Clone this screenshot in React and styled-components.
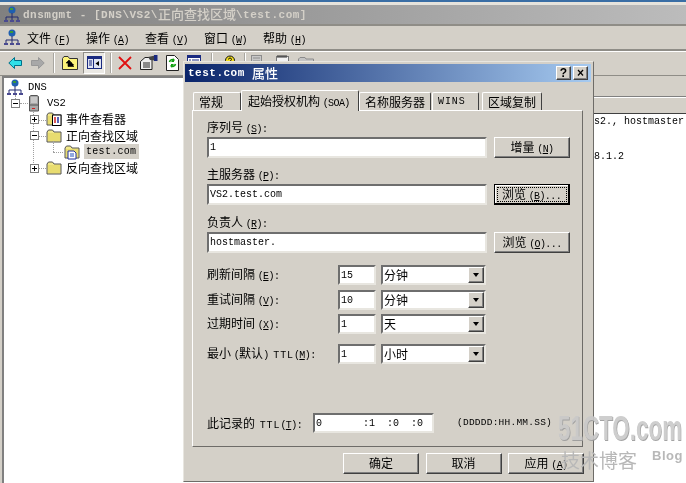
import styled, { createGlobalStyle } from 'styled-components';

const GlobalStyle = createGlobalStyle`
    html, body {
        margin: 0;
        padding: 0;
        background: #fff;
    }
    body {
        font-family: "Noto Sans CJK SC", "Liberation Sans", sans-serif;
        font-size: 12px;
        color: #000;
    }
`;

const monoStack = `"Liberation Mono", "DejaVu Sans Mono", monospace`;

const raised = `
    border: 1px solid;
    border-color: #fff #404040 #404040 #fff;
    box-shadow: inset -1px -1px 0 #808080;
`;

const sunken = `
    border: 2px solid;
    border-color: #6e6e6e #e8e6e0 #e8e6e0 #6e6e6e;
    background: #fff;
    box-sizing: border-box;
`;

const Screen = styled.div`
    position: relative;
    width: 686px;
    height: 483px;
    overflow: hidden;
    background: #d4d0c8;
    display: flex;
    flex-direction: column;
    filter: blur(0.35px);
`;

const TopEdge = styled.div`
    height: 2px;
    background: #3a6ea5;
    border-bottom: 3px solid #e6e3dc;
`;

const TitleBar = styled.div`
    height: 19px;
    display: flex;
    align-items: center;
    gap: 3px;
    padding-left: 4px;
    background: linear-gradient(90deg, #808080, #bcbcbc);
    color: #d4d0c8;
    border-bottom: 2px solid #8f8d87;
`;

const TitleText = styled.span`
    font-family: ${monoStack};
    font-size: 11px;
    letter-spacing: 0.5px;
    font-weight: bold;
    display: flex;
    align-items: center;
    white-space: pre;
    b {
        font-family: "Noto Sans CJK SC", sans-serif;
        font-size: 13px;
        font-weight: 500;
        letter-spacing: 0;
        margin-top: -2px;
    }
`;

const MenuBar = styled.div`
    height: 23px;
    display: flex;
    align-items: center;
    padding-left: 4px;
    border-bottom: 2px solid #8f8d87;
    box-shadow: 0 1px 0 #fff;
`;

const MenuIconSlot = styled.div`
    width: 23px;
    height: 17px;
`;

const MenuItem = styled.span`
    width: 59px;
    white-space: nowrap;
    font-size: 12px;
`;

const Mn = styled.span`
    font-family: ${monoStack};
    font-size: 10px;
    letter-spacing: -0.6px;
`;

const WideMono = styled.span`
    font-family: ${monoStack};
    font-size: 10px;
    letter-spacing: 0.9px;
    margin-left: ${(p) => p.$ml || 0}px;
    margin-right: ${(p) => p.$mr || 0}px;
`;

const TabMono = styled(WideMono)`
    display: block;
    line-height: 18px;
`;

const Hot = ({ k, tail }) => (
    <Mn>
        (<u>{k}</u>){tail}
    </Mn>
);

const ToolBar = styled.div`
    height: 23px;
    padding: 0 0 1px 8px;
    display: flex;
    align-items: center;
    border-bottom: 1px solid #8f8d87;
`;

const ToolSlot = styled.div`
    width: ${(p) => p.$w}px;
    margin-right: ${(p) => p.$mr || 0}px;
    height: 22px;
    display: flex;
    align-items: center;
    justify-content: center;
    flex: none;
    box-sizing: border-box;
    ${(p) =>
        p.$on &&
        `
        background: #ebe9e4;
        border: 1px solid;
        border-color: #8f8d87 #fff #fff #8f8d87;
    `}
`;

const ToolSep = styled.div`
    width: 2px;
    height: 20px;
    flex: none;
    margin: ${(p) => p.$m};
    background: #a8a6a0;
    border-right: 1px solid #fff;
    box-sizing: border-box;
`;

const Workspace = styled.div`
    flex: 1;
    display: flex;
    padding: 0 0 0 2px;
    min-height: 0;
`;

const TreePane = styled.div`
    position: relative;
    width: 190px;
    flex: none;
    padding: 1px 0 0 3px;
    background: #fff;
    border-top: 2px solid #808080;
    border-left: 2px solid #808080;
    box-sizing: border-box;
`;

const TreeRow = styled.div`
    height: 16.2px;
    display: flex;
    align-items: center;
    padding-left: ${(p) => p.$indent}px;
    white-space: nowrap;
`;

const Expander = styled.div`
    width: 9px;
    height: 9px;
    flex: none;
    margin-right: ${(p) => p.$gap}px;
    border: 1px solid #808080;
    box-sizing: border-box;
    background: #fff;
    position: relative;
    &::before {
        content: '';
        position: absolute;
        left: 1px;
        top: 3px;
        width: 5px;
        height: 1px;
        background: #000;
    }
    &::after {
        content: '';
        display: ${(p) => (p.$open ? 'none' : 'block')};
        position: absolute;
        left: 3px;
        top: 1px;
        width: 1px;
        height: 5px;
        background: #000;
    }
`;

const RowIcon = styled.div`
    width: ${(p) => p.$w || 16}px;
    flex: none;
    height: 16px;
    margin-right: ${(p) => p.$mr ?? 4}px;
`;

const TreeLabel = styled.span`
    font-size: 12px;
    line-height: 14px;
`;

const TreeMono = styled.span`
    font-family: ${monoStack};
    font-size: 10.5px;
    padding: 1px 2px;
    line-height: 13px;
    ${(p) => p.$selected && `background: #d4d0c8; width: 51px; font-size: 10px; letter-spacing: 0.3px;`}
`;

const GuideV = styled.div`
    position: absolute;
    left: ${(p) => p.$x}px;
    top: ${(p) => p.$y}px;
    height: ${(p) => p.$h}px;
    border-left: 1px dotted #a0a0a0;
`;

const GuideH = styled.div`
    position: absolute;
    left: ${(p) => p.$x}px;
    top: ${(p) => p.$y}px;
    width: ${(p) => p.$w}px;
    border-top: 1px dotted #a0a0a0;
`;

const DetailPane = styled.div`
    flex: 1;
    display: flex;
    flex-direction: column;
    align-items: flex-end;
`;

const DetailRule = styled.div`
    align-self: stretch;
    height: 1px;
    background: #808080;
    border-bottom: 1px solid #fff;
    margin-top: ${(p) => p.$top}px;
`;

const DetailBody = styled.div`
    align-self: stretch;
    flex: 1;
    background: #fff;
    border-top: 1px solid #404040;
    margin-top: 15px;
    font-family: ${monoStack};
    font-size: 10px;
`;

const DetailLine = styled.div`
    height: 13px;
    margin-left: 402px;
    margin-top: ${(p) => p.$top}px;
    white-space: pre;
`;

/* properties dialog floats above the console window */
const Dialog = styled.div`
    position: absolute;
    left: 183px;
    top: 61px;
    width: 411px;
    height: 421px;
    box-sizing: border-box;
    background: #d4d0c8;
    border: 1px solid;
    border-color: #e8e6e0 #6e6c68 #6e6c68 #e8e6e0;
    padding: 2px 2px 2px 1px;
    display: flex;
    flex-direction: column;
`;

const DialogTitle = styled.div`
    height: 18px;
    flex: none;
    display: flex;
    align-items: center;
    justify-content: space-between;
    padding: 0 3px;
    background: linear-gradient(90deg, #0a246a, #a6caf0);
    color: #fff;
`;

const CaptionGroup = styled.div`
    display: flex;
    gap: 2px;
`;

const CaptionBtn = styled.div`
    width: 15px;
    height: 14px;
    box-sizing: border-box;
    background: #d4d0c8;
    color: #000;
    ${raised}
    font-family: "Liberation Sans", sans-serif;
    font-weight: bold;
    font-size: 12px;
    line-height: 12px;
    text-align: center;
`;

const TabStrip = styled.div`
    height: 20px;
    margin: 8px 0 0 8px;
    display: flex;
    align-items: flex-end;
    flex: none;
    position: relative;
    z-index: 1;
`;

const Tab = styled.div`
    width: ${(p) => p.$w}px;
    height: ${(p) => (p.$active ? 21 : 18)}px;
    margin-bottom: ${(p) => (p.$active ? -1 : 0)}px;
    background: #d4d0c8;
    box-sizing: border-box;
    border: 1px solid;
    border-bottom: none;
    border-color: #fff #404040 #d4d0c8 #fff;
    border-radius: 2px 2px 0 0;
    padding: ${(p) => (p.$active ? '1px 0 0 6px' : '0 0 0 5px')};
    margin-right: ${(p) => p.$mr || 0}px;
    white-space: nowrap;
    line-height: 17px;
`;

const Panel = styled.div`
    height: 337px;
    margin: 0 8px 0 7px;
    flex: none;
    box-sizing: border-box;
    border: 1px solid;
    border-color: #fff #6e6c68 #6e6c68 #fff;
    padding: 9px 13px 0 14px;
`;

const Label = styled.div`
    height: 17px;
    line-height: 14px;
    white-space: nowrap;
    margin-top: ${(p) => p.$top || 0}px;
`;

const FieldRow = styled.div`
    display: flex;
    gap: 7px;
    margin-bottom: ${(p) => p.$mb || 0}px;
`;

const TextBox = styled.div`
    ${sunken}
    width: ${(p) => p.$w}px;
    height: ${(p) => p.$h || 20}px;
    padding-left: 1px;
    font-family: ${monoStack};
    font-size: 10px;
    line-height: 17px;
    white-space: pre;
    flex: none;
`;

const Button = styled.div`
    width: 76px;
    height: 21px;
    box-sizing: border-box;
    flex: none;
    ${raised}
    text-align: center;
    line-height: 18px;
    white-space: nowrap;
    background: #d4d0c8;
    ${(p) =>
        p.$default &&
        `
        border: 1px solid #000;
        border-right-width: 2px;
        border-bottom-width: 2px;
        box-shadow: inset 1px 1px 0 #fff;
        outline: 1px dotted #000;
        outline-offset: -4px;
    `}
`;

const IntervalRow = styled.div`
    display: flex;
    align-items: center;
    height: 20px;
    margin-bottom: ${(p) => p.$mb || 4}px;
`;

const IntervalLabel = styled.div`
    width: 131px;
    flex: none;
    white-space: nowrap;
    line-height: 15px;
`;

const Combo = styled.div`
    ${sunken}
    width: 105px;
    height: 20px;
    margin-left: 5px;
    display: flex;
    justify-content: space-between;
    padding-left: 1px;
    line-height: 16px;
`;

const ComboArrow = styled.div`
    width: 16px;
    height: 16px;
    background: #d4d0c8;
    ${raised}
    box-sizing: border-box;
    display: flex;
    align-items: center;
    justify-content: center;
    &::after {
        content: '';
        border: 3.5px solid transparent;
        border-top: 4px solid #000;
        border-bottom: none;
    }
`;

const TtlRow = styled.div`
    display: flex;
    align-items: center;
    height: 21px;
    margin-top: 48px;
`;

const TtlLabel = styled.div`
    width: 106px;
    flex: none;
    white-space: nowrap;
`;

const TtlBox = styled.div`
    ${sunken}
    width: 121px;
    height: 20px;
    flex: none;
    font-family: ${monoStack};
    font-size: 10px;
    line-height: 17px;
    display: grid;
    grid-template-columns: 47px 24px 24px 20px;
    padding-left: 1px;
    white-space: pre;
`;

const TtlFormat = styled.div`
    margin-left: 23px;
    font-family: ${monoStack};
    font-size: 9.5px;
    letter-spacing: 0.24px;
    white-space: nowrap;
`;

const ButtonRow = styled.div`
    display: flex;
    justify-content: flex-end;
    gap: 6.5px;
    margin: 6px 7px 0 0;
`;

const Watermark = styled.div`
    position: absolute;
    left: 558px;
    top: 407px;
    width: 128px;
    pointer-events: none;
`;

const WatermarkBig = styled.div`
    font-family: "Liberation Sans", sans-serif;
    font-weight: bold;
    font-size: 35px;
    line-height: 42px;
    white-space: nowrap;
    transform: scaleX(0.64);
    transform-origin: left;
    width: 200px;
    color: #c9c9c9;
    text-shadow: 1px 1px 0 #9a9a9a;
    opacity: 0.9;
`;

const WatermarkSmall = styled.div`
    display: flex;
    justify-content: space-between;
    align-items: flex-start;
    padding: 0 3px;
    font-size: 19px;
    line-height: 22px;
    color: #b8b8b8;
    span {
        font-family: "Liberation Sans", sans-serif;
        font-weight: bold;
        font-size: 13px;
        letter-spacing: 0.5px;
        line-height: 13px;
    }
`;

const NetworkIcon = () => (
    <svg width="16" height="17" viewBox="0 0 16 17">
        <circle cx="8" cy="4" r="3.5" fill="#1f5fb0" />
        <path d="M6 2h3v2H6z" fill="#3a9a3a" />
        <path d="M8 7v4M2 11h12M2 11v3M8 11v3M14 11v3" stroke="#222a70" fill="none" />
        <path d="M0 14h4v2H0zM6 14h4v2H6zM12 14h4v2h-4z" fill="#4a4a90" />
    </svg>
);

const ServerIcon = () => (
    <svg width="11" height="17" viewBox="0 0 11 17">
        <path d="M1.5 1.5L3 .5h6l1.5 1V16h-9z" fill="#a8a8a8" stroke="#555" />
        <path d="M3 3h6M3 5h6M3 7h6" stroke="#e8e8e8" />
        <path d="M1 10h9" stroke="#555" />
        <rect x="4" y="13" width="3" height="1" fill="#d02020" />
    </svg>
);

const FolderIcon = ({ children }) => (
    <svg width="16" height="16" viewBox="0 0 16 16">
        <path d="M1 4l1.5-2h4L8 4h7v10H1z" fill="#f2e88a" stroke="#555" />
        <path d="M2 5h12v8H2z" fill="#e8dc70" />
        {children}
    </svg>
);

const EventIcon = () => (
    <FolderIcon>
        <rect x="6.5" y="4" width="8.5" height="10.5" fill="#fff" stroke="#000" />
        <path d="M9 6v6" stroke="#d02020" strokeWidth="1.5" />
        <path d="M12 6v6" stroke="#2030a0" strokeWidth="1.5" />
    </FolderIcon>
);

const ZoneIcon = () => (
    <FolderIcon>
        <path d="M4 7h6l2 2v6H4z" fill="#fff" stroke="#2030a0" />
        <path d="M6 10h4M6 12h4" stroke="#2050c0" />
    </FolderIcon>
);

const BackArrow = () => (
    <svg width="14" height="12" viewBox="0 0 14 12">
        <path d="M6.5.5L.8 6l5.7 5.5V8.5h7v-5h-7z" fill="#2fe0e8" stroke="#00708a" />
    </svg>
);

const ForwardArrow = () => (
    <svg width="14" height="12" viewBox="0 0 14 12">
        <path d="M7.5.5L13.2 6l-5.7 5.5V8.5h-7v-5h7z" fill="#a8a8a8" stroke="#989898" />
    </svg>
);

const UpFolder = () => (
    <svg width="16" height="14" viewBox="0 0 16 14">
        <path d="M.5 2.5L2 .5h4l1.5 2h8v11H.5z" fill="#fdf47a" stroke="#333" />
        <path d="M7 4L4 7h2v3.5h6M7 4l3 3H8v2h4" fill="#000" stroke="#000" strokeWidth=".6" />
    </svg>
);

const PaneToggle = () => (
    <svg width="15" height="13" viewBox="0 0 15 13">
        <rect x=".5" y=".5" width="14" height="12" fill="#dfe3f2" stroke="#1a2a80" />
        <path d="M1 1h13v2H1z" fill="#1a2a80" />
        <path d="M6.5 3v9" stroke="#1a2a80" />
        <path d="M2 5h3M2 7h3M2 9h3" stroke="#1a2a80" />
        <path d="M12 5v5L8.5 7.5z" fill="#000" />
    </svg>
);

const RedX = () => (
    <svg width="14" height="14" viewBox="0 0 14 14">
        <path d="M1 1l12 12M13 1L1 13" stroke="#e01010" strokeWidth="1.8" />
    </svg>
);

const PropertiesIcon = () => (
    <svg width="18" height="15" viewBox="0 0 18 15">
        <path d="M.5 6.5L5 2.5h7v12H.5z" fill="#eee" stroke="#222" />
        <path d="M3 8h7M3 10h7M3 12h7" stroke="#222" />
        <path d="M8 2l7-1.5v5L10 5z" fill="#444" />
        <rect x="14" y="0" width="3.5" height="6" fill="#1a2a80" />
    </svg>
);

const RefreshIcon = () => (
    <svg width="13" height="16" viewBox="0 0 13 16">
        <path d="M.5.5h8l4 4v11H.5z" fill="#fff" stroke="#222" />
        <path d="M3.5 7a3 3 0 015-1.5M9.5 9a3 3 0 01-5 1.5" stroke="#10a010" strokeWidth="1.6" fill="none" />
        <path d="M8 3v4h-3zM5 13V9h3z" fill="#10a010" />
    </svg>
);

const ListIcon = () => (
    <svg width="14" height="16" viewBox="0 0 14 16">
        <rect x=".5" y=".5" width="13" height="15" fill="#fff" stroke="#1a2a80" />
        <path d="M1 1h12v2H1z" fill="#1a2a80" />
        <path d="M2 5h2M5 5h7M2 8h2M5 8h7" stroke="#1a2a80" />
    </svg>
);

const HelpIcon = () => (
    <svg width="15" height="16" viewBox="0 0 15 16">
        <path d="M.5 15.5L5 7.5h3v8z" fill="#fff" stroke="#111" />
        <circle cx="10" cy="5.5" r="4.5" fill="#f5e020" stroke="#111" />
        <path d="M8.5 4.5a1.5 1.5 0 113 0L10 6.5v1" stroke="#111" fill="none" />
    </svg>
);

const GrayPage = () => (
    <svg width="11" height="16" viewBox="0 0 11 16">
        <rect x=".5" y=".5" width="10" height="15" fill="#c8c8c8" stroke="#8c8c8c" />
        <path d="M2 3h7M2 6h7" stroke="#8c8c8c" />
    </svg>
);

const GrayNote = () => (
    <svg width="13" height="16" viewBox="0 0 13 16">
        <rect x=".5" y="1.5" width="12" height="14" fill="#f2f2f2" stroke="#777" />
        <path d="M2 0v3M4 0v3M6 0v3M8 0v3M10 0v3" stroke="#333" />
    </svg>
);

const GrayFolder = () => (
    <svg width="16" height="16" viewBox="0 0 16 16">
        <path d="M.5 15.5V4L2 2.5h5L8 4h7.5v11.5z" fill="#c4c4c4" stroke="#8c8c8c" />
    </svg>
);

function TreeView() {
    return (
        <TreePane>
            <GuideV $x={11} $y={17} $h={4} />
            <GuideH $x={16} $y={25} $w={8} />
            <GuideV $x={29} $y={34} $h={53} />
            <GuideH $x={34} $y={42} $w={8} />
            <GuideH $x={34} $y={58} $w={8} />
            <GuideV $x={49} $y={63} $h={11} />
            <GuideH $x={49} $y={74} $w={10} />
            <GuideH $x={34} $y={90} $w={8} />
            <TreeRow $indent={0}>
                <RowIcon $mr={3}>
                    <NetworkIcon />
                </RowIcon>
                <TreeMono>DNS</TreeMono>
            </TreeRow>
            <TreeRow $indent={4}>
                <Expander $open $gap={8} />
                <RowIcon $w={11} $mr={6}>
                    <ServerIcon />
                </RowIcon>
                <TreeMono>VS2</TreeMono>
            </TreeRow>
            <TreeRow $indent={23}>
                <Expander $gap={7} />
                <RowIcon>
                    <EventIcon />
                </RowIcon>
                <TreeLabel>事件查看器</TreeLabel>
            </TreeRow>
            <TreeRow $indent={23}>
                <Expander $open $gap={7} />
                <RowIcon>
                    <FolderIcon />
                </RowIcon>
                <TreeLabel>正向查找区域</TreeLabel>
            </TreeRow>
            <TreeRow $indent={57}>
                <RowIcon>
                    <ZoneIcon />
                </RowIcon>
                <TreeMono $selected>test.com</TreeMono>
            </TreeRow>
            <TreeRow $indent={23}>
                <Expander $gap={7} />
                <RowIcon>
                    <FolderIcon />
                </RowIcon>
                <TreeLabel>反向查找区域</TreeLabel>
            </TreeRow>
        </TreePane>
    );
}

function SoaDialog() {
    return (
        <Dialog>
            <DialogTitle>
                <TitleText>
                    test.com <b>属性</b>
                </TitleText>
                <CaptionGroup>
                    <CaptionBtn>?</CaptionBtn>
                    <CaptionBtn>×</CaptionBtn>
                </CaptionGroup>
            </DialogTitle>
            <TabStrip>
                <Tab $w={48}>常规</Tab>
                <Tab $w={118} $active>
                    起始授权机构 <Mn>(SOA)</Mn>
                </Tab>
                <Tab $w={72} $mr={1}>
                    名称服务器
                </Tab>
                <Tab $w={47} $mr={3}>
                    <TabMono>WINS</TabMono>
                </Tab>
                <Tab $w={60}>区域复制</Tab>
            </TabStrip>
            <Panel>
                <Label>
                    序列号 <Hot k="S" tail=":" />
                </Label>
                <FieldRow>
                    <TextBox $w={280} $h={21}>
                        1
                    </TextBox>
                    <Button>
                        增量 <Hot k="N" />
                    </Button>
                </FieldRow>
                <Label $top={9}>
                    主服务器 <Hot k="P" tail=":" />
                </Label>
                <FieldRow>
                    <TextBox $w={280} $h={21}>
                        VS2.test.com
                    </TextBox>
                    <Button $default>
                        浏览 <Hot k="B" tail="..." />
                    </Button>
                </FieldRow>
                <Label $top={10}>
                    负责人 <Hot k="R" tail=":" />
                </Label>
                <FieldRow $mb={12}>
                    <TextBox $w={280} $h={21}>
                        hostmaster.
                    </TextBox>
                    <Button>
                        浏览 <Hot k="O" tail="..." />
                    </Button>
                </FieldRow>
                <IntervalRow $mb={5}>
                    <IntervalLabel>
                        刷新间隔 <Hot k="E" tail=":" />
                    </IntervalLabel>
                    <TextBox $w={38}>15</TextBox>
                    <Combo>
                        分钟
                        <ComboArrow />
                    </Combo>
                </IntervalRow>
                <IntervalRow>
                    <IntervalLabel>
                        重试间隔 <Hot k="V" tail=":" />
                    </IntervalLabel>
                    <TextBox $w={38}>10</TextBox>
                    <Combo>
                        分钟
                        <ComboArrow />
                    </Combo>
                </IntervalRow>
                <IntervalRow $mb={10}>
                    <IntervalLabel>
                        过期时间 <Hot k="X" tail=":" />
                    </IntervalLabel>
                    <TextBox $w={38}>1</TextBox>
                    <Combo>
                        天
                        <ComboArrow />
                    </Combo>
                </IntervalRow>
                <IntervalRow>
                    <IntervalLabel>
                        最小 <Mn>(</Mn>默认<Mn>)</Mn> <WideMono $ml={2}>TTL</WideMono>
                        <Hot k="M" tail=":" />
                    </IntervalLabel>
                    <TextBox $w={38}>1</TextBox>
                    <Combo>
                        小时
                        <ComboArrow />
                    </Combo>
                </IntervalRow>
                <TtlRow>
                    <TtlLabel>
                        此记录的 <WideMono $ml={2}>TTL</WideMono>
                        <Hot k="T" tail=":" />
                    </TtlLabel>
                    <TtlBox>
                        <span>0</span>
                        <span>:1</span>
                        <span>:0</span>
                        <span>:0</span>
                    </TtlBox>
                    <TtlFormat>(DDDDD:HH.MM.SS)</TtlFormat>
                </TtlRow>
            </Panel>
            <ButtonRow>
                <Button>确定</Button>
                <Button>取消</Button>
                <Button>
                    应用 <Hot k="A" />
                </Button>
            </ButtonRow>
        </Dialog>
    );
}

export default function App() {
    return (
        <>
            <GlobalStyle />
            <Screen>
                <TopEdge />
                <TitleBar>
                    <NetworkIcon />
                    <TitleText>
                        dnsmgmt - [DNS\VS2\<b>正向查找区域</b>\test.com]
                    </TitleText>
                </TitleBar>
                <MenuBar>
                    <MenuIconSlot>
                        <NetworkIcon />
                    </MenuIconSlot>
                    <MenuItem>
                        文件 <Hot k="F" />
                    </MenuItem>
                    <MenuItem>
                        操作 <Hot k="A" />
                    </MenuItem>
                    <MenuItem>
                        查看 <Hot k="V" />
                    </MenuItem>
                    <MenuItem>
                        窗口 <Hot k="W" />
                    </MenuItem>
                    <MenuItem>
                        帮助 <Hot k="H" />
                    </MenuItem>
                </MenuBar>
                <ToolBar>
                    <ToolSlot $w={14} $mr={9}>
                        <BackArrow />
                    </ToolSlot>
                    <ToolSlot $w={14}>
                        <ForwardArrow />
                    </ToolSlot>
                    <ToolSep $m="0 7px 0 8px" />
                    <ToolSlot $w={16} $mr={5}>
                        <UpFolder />
                    </ToolSlot>
                    <ToolSlot $w={22} $on>
                        <PaneToggle />
                    </ToolSlot>
                    <ToolSep $m="0 6px 0 5px" />
                    <ToolSlot $w={14} $mr={8}>
                        <RedX />
                    </ToolSlot>
                    <ToolSlot $w={18} $mr={8}>
                        <PropertiesIcon />
                    </ToolSlot>
                    <ToolSlot $w={13} $mr={8}>
                        <RefreshIcon />
                    </ToolSlot>
                    <ToolSlot $w={14}>
                        <ListIcon />
                    </ToolSlot>
                    <ToolSep $m="0 7px 0 10px" />
                    <ToolSlot $w={15}>
                        <HelpIcon />
                    </ToolSlot>
                    <ToolSep $m="0 5px 0 9px" />
                    <ToolSlot $w={11} $mr={14}>
                        <GrayPage />
                    </ToolSlot>
                    <ToolSlot $w={13} $mr={9}>
                        <GrayNote />
                    </ToolSlot>
                    <ToolSlot $w={16}>
                        <GrayFolder />
                    </ToolSlot>
                </ToolBar>
                <Workspace>
                    <TreeView />
                    <DetailPane>
                        <DetailRule $top={20} />
                        <DetailBody>
                            <DetailLine $top={2}>s2., hostmaster</DetailLine>
                            <DetailLine $top={22}>8.1.2</DetailLine>
                        </DetailBody>
                    </DetailPane>
                </Workspace>
                <SoaDialog />
                <Watermark>
                    <WatermarkBig>51CTO.com</WatermarkBig>
                    <WatermarkSmall>
                        技术博客
                        <span>Blog</span>
                    </WatermarkSmall>
                </Watermark>
            </Screen>
        </>
    );
}
